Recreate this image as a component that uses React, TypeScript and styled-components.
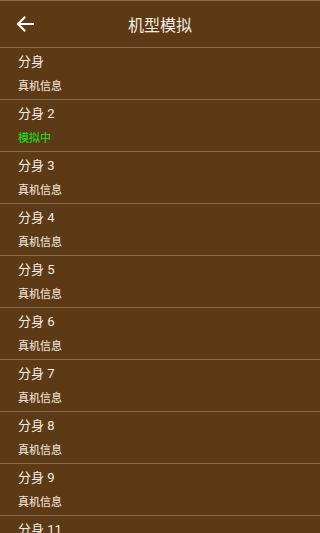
import styled, { createGlobalStyle } from 'styled-components';

const GlobalStyle = createGlobalStyle`
  html, body {
    margin: 0;
    padding: 0;
    background: #5c3a15;
  }
  body {
    font-family: Roboto, "Noto Sans CJK SC", sans-serif;
  }
`;

interface Clone {
  name: string;
  active?: boolean;
}

const clones: Clone[] = [
  { name: '分身' },
  { name: '分身 2', active: true },
  { name: '分身 3' },
  { name: '分身 4' },
  { name: '分身 5' },
  { name: '分身 6' },
  { name: '分身 7' },
  { name: '分身 8' },
  { name: '分身 9' },
  { name: '分身 11' },
];

function App() {
  return (
    <>
      <GlobalStyle />
      <Page>
        <Header>
          <BackButton>
            <svg width="18" height="18" viewBox="0 0 18 18" fill="none">
              <path
                d="M17 9H2M8.5 2.5L2 9l6.5 6.5"
                stroke="#fff"
                strokeWidth="2"
                strokeLinecap="square"
              />
            </svg>
          </BackButton>
          <Title>机型模拟</Title>
        </Header>
        <List>
          {clones.map((c) => (
            <Row key={c.name}>
              <Name>{c.name}</Name>
              <Status active={c.active}>{c.active ? '模拟中' : '真机信息'}</Status>
            </Row>
          ))}
        </List>
      </Page>
    </>
  );
}

export default App;

const Page = styled.div`
  width: 320px;
  height: 533px;
  overflow: hidden;
  background: #5c3a15;
  border-top: 1px solid #8a6a48;
  box-sizing: border-box;
`;

const Header = styled.div`
  height: 46px;
  display: flex;
  align-items: center;
  position: relative;
  border-bottom: 1px solid #8a6a48;
`;

const BackButton = styled.div`
  width: 50px;
  height: 46px;
  display: flex;
  align-items: center;
  justify-content: center;
`;

const Title = styled.div`
  position: absolute;
  left: 0;
  right: 0;
  text-align: center;
  color: #f4ece4;
  font-size: 16px;
  pointer-events: none;
`;

const List = styled.div`
  display: flex;
  flex-direction: column;
`;

const Row = styled.div`
  height: 51px;
  border-bottom: 1px solid #8a6a48;
  padding-left: 18px;
  display: flex;
  flex-direction: column;
  justify-content: center;
  gap: 10px;
`;

const Name = styled.div`
  color: #f4ece4;
  font-size: 13px;
  line-height: 16px;
`;

const Status = styled.div<{ active?: boolean }>`
  color: ${(p) => (p.active ? '#1fd41a' : '#e6dbd0')};
  font-size: 11px;
  font-weight: 500;
  line-height: 14px;
`;
